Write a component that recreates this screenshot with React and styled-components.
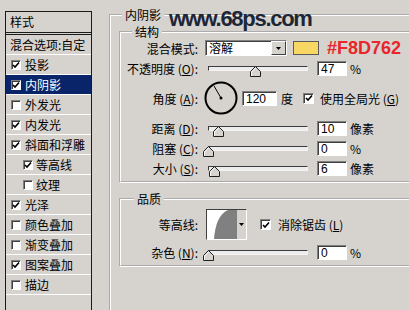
import React from "react";
import styled, { createGlobalStyle } from "styled-components";

const GlobalStyle = createGlobalStyle`
  html, body {
    margin: 0;
    padding: 0;
  }
  body {
    background: #d6d3ce;
    overflow: hidden;
    font-family: "Noto Sans CJK SC", "Noto Sans", sans-serif;
    font-size: 12px;
    color: #000;
  }
`;

const styleItems = [
  { label: "投影", checked: true },
  { label: "内阴影", checked: true, active: true },
  { label: "外发光", checked: false },
  { label: "内发光", checked: true },
  { label: "斜面和浮雕", checked: true },
  { label: "等高线", checked: true, indent: true },
  { label: "纹理", checked: false, indent: true },
  { label: "光泽", checked: true },
  { label: "颜色叠加", checked: false },
  { label: "渐变叠加", checked: false },
  { label: "图案叠加", checked: true },
  { label: "描边", checked: false },
];

const sliderRows = [
  { label: "距离", key: "D", value: 10, unit: "像素" },
  { label: "阻塞", key: "C", value: 0, unit: "%" },
  { label: "大小", key: "S", value: 6, unit: "像素" },
];

const CheckBox = ({ checked, size = 11 }) => (
  <Check $size={size}>
    {checked && (
      <svg width="8" height="8" viewBox="0 0 8 8">
        <polyline points="1,4 3,6 7,1.5" fill="none" stroke="#000" strokeWidth="1.6" />
      </svg>
    )}
  </Check>
);

const Slider = ({ value }) => (
  <SliderWrap>
    <Track />
    <Thumb viewBox="0 0 11 11" style={{ left: `calc(${value}% - 5px)` }}>
      <polygon points="5.5,0.5 10.5,5.5 10.5,10.5 0.5,10.5 0.5,5.5" fill="#d6d3ce" stroke="#202020" />
      <polyline points="1.5,10 1.5,6 5.5,2" fill="none" stroke="#fff" />
    </Thumb>
  </SliderWrap>
);

const Key = ({ k }) => (
  <>
    {" ("}
    <u>{k}</u>
    {"):"}
  </>
);

const App = () => {
  return (
    <Page>
      <GlobalStyle />
      <StylePanel>
        <PanelTitle>样式</PanelTitle>
        <PanelItem $plain>混合选项:自定</PanelItem>
        {styleItems.map((item) => (
          <PanelItem key={item.label} $indent={item.indent} $active={item.active}>
            <CheckBox checked={item.checked} size={10} />
            <ItemLabel $indent={item.indent}>{item.label}</ItemLabel>
          </PanelItem>
        ))}
      </StylePanel>

      <Main>
        <OuterGroup>
          <Legend>内阴影</Legend>
          <Group $top={5} $bottom={3}>
            <Legend>结构</Legend>
            <Row>
              <FieldLabel>混合模式:</FieldLabel>
              <Select>
                <SelectText>溶解</SelectText>
                <DropButton>
                  <svg width="5" height="3" viewBox="0 0 5 3">
                    <polygon points="0,0 5,0 2.5,3" fill="#000" />
                  </svg>
                </DropButton>
              </Select>
              <Swatch />
              <HexText>#F8D762</HexText>
            </Row>
            <Row>
              <FieldLabel>
                不透明度<Key k="O" />
              </FieldLabel>
              <Slider value={47} />
              <ValueBox>47</ValueBox>
              <Unit>%</Unit>
            </Row>
            <Row $h={40}>
              <FieldLabel>
                角度<Key k="A" />
              </FieldLabel>
              <Dial viewBox="0 0 34 34">
                <circle cx="17" cy="17" r="15.5" fill="none" stroke="#000" strokeWidth="2" />
                <line x1="17" y1="17" x2="10" y2="4.9" stroke="#000" strokeWidth="1" />
                <circle cx="17" cy="17" r="1.5" fill="#000" />
              </Dial>
              <ValueBox $gap={4} $w={35}>120</ValueBox>
              <Unit $gap={4}>度</Unit>
              <CheckGap $gap={10}>
                <CheckBox checked />
              </CheckGap>
              <Unit $gap={6}>
                使用全局光 (<u>G</u>)
              </Unit>
            </Row>
            {sliderRows.map((row) => (
              <Row key={row.key}>
                <FieldLabel>
                  {row.label}
                  <Key k={row.key} />
                </FieldLabel>
                <Slider value={row.value} />
                <ValueBox>{row.value}</ValueBox>
                <Unit>{row.unit}</Unit>
              </Row>
            ))}
          </Group>

          <Group $top={10} $bottom={3} $padTop={2}>
            <Legend $offset={13}>品质</Legend>
            <Row $h={35}>
              <FieldLabel>等高线:</FieldLabel>
              <Contour>
                <svg width="29" height="29" viewBox="0 0 29 29">
                  <rect width="29" height="29" fill="#fff" />
                  <path d="M7 29 C 8 15, 12 4, 21 0 L 29 0 L 29 29 Z" fill="#808080" />
                </svg>
                <ContourDrop>
                  <svg width="5" height="3" viewBox="0 0 5 3">
                    <polygon points="0,0 5,0 2.5,3" fill="#000" />
                  </svg>
                </ContourDrop>
              </Contour>
              <CheckGap $gap={13}>
                <CheckBox checked />
              </CheckGap>
              <Unit $gap={7}>
                消除锯齿 (<u>L</u>)
              </Unit>
            </Row>
            <Row>
              <FieldLabel>
                杂色<Key k="N" />
              </FieldLabel>
              <Slider value={0} />
              <ValueBox>0</ValueBox>
              <Unit>%</Unit>
            </Row>
          </Group>
        </OuterGroup>
      </Main>

      <Watermark>www.68ps.com</Watermark>
    </Page>
  );
};

export default App;

const Page = styled.div`
  position: relative;
  display: flex;
  align-items: flex-start;
  width: 409px;
  height: 310px;
  overflow: hidden;
`;

const StylePanel = styled.div`
  margin: 11px 0 0 5px;
  width: 87px;
  height: 310px;
  flex-shrink: 0;
  box-sizing: border-box;
  border: 1px solid #1a1a1a;
  border-bottom: none;
`;

const PanelTitle = styled.div`
  height: 20px;
  line-height: 20px;
  padding-left: 4px;
  border-bottom: 3px double #1a1a1a;
`;

const PanelItem = styled.div`
  display: flex;
  align-items: center;
  height: 19px;
  padding-left: ${(p) => (p.$plain ? 4 : p.$indent ? 17 : 5)}px;
  border-bottom: 1px solid #fff;
  white-space: nowrap;
  background: ${(p) => (p.$active ? "#0a246a" : "transparent")};
  color: ${(p) => (p.$active ? "#fff" : "#000")};
`;

const ItemLabel = styled.span`
  margin-left: ${(p) => (p.$indent ? 3 : 4)}px;
`;

const Check = styled.span`
  display: inline-flex;
  align-items: center;
  justify-content: center;
  flex-shrink: 0;
  width: ${(p) => p.$size}px;
  height: ${(p) => p.$size}px;
  box-sizing: border-box;
  background: #fff;
  border: 1px solid;
  border-color: #808080 #fff #fff #808080;
  box-shadow: inset 1px 1px #404040;
`;

const CheckGap = styled.span`
  display: inline-flex;
  margin-left: ${(p) => p.$gap}px;
`;

const Main = styled.div`
  margin-left: 17px;
  flex-shrink: 0;
`;

const OuterGroup = styled.fieldset`
  margin: 9px 0 0;
  padding: 0;
  min-width: 0;
  width: 330px;
  height: 320px;
  box-sizing: border-box;
  border: 2px groove #fff;
`;

const Group = styled.fieldset`
  margin: ${(p) => p.$top}px 0 0 8px;
  padding: ${(p) => p.$padTop || 0}px 0 ${(p) => p.$bottom}px 0;
  min-width: 0;
  width: 300px;
  box-sizing: border-box;
  border: 2px groove #fff;
`;

const Legend = styled.legend`
  margin-left: ${(p) => p.$offset || 11}px;
  padding: 0 3px;
  height: 12px;
  line-height: 12px;
  font-size: 12px;
`;

const Row = styled.div`
  display: flex;
  align-items: center;
  height: ${(p) => p.$h || 20}px;
  white-space: nowrap;
`;

const FieldLabel = styled.div`
  width: 77px;
  flex-shrink: 0;
  text-align: right;
  u {
    text-decoration-thickness: 1px;
  }
`;

const Select = styled.div`
  display: flex;
  margin-left: 7px;
  width: 82px;
  height: 16px;
  box-sizing: border-box;
  background: #fff;
  border: 1px solid;
  border-color: #808080 #fff #fff #808080;
  box-shadow: inset 1px 1px #404040;
`;

const SelectText = styled.span`
  flex: 1;
  padding-left: 3px;
  line-height: 14px;
`;

const DropButton = styled.span`
  display: flex;
  align-items: center;
  justify-content: center;
  width: 15px;
  box-sizing: border-box;
  background: #d6d3ce;
  border: 1px solid;
  border-color: #fff #404040 #404040 #fff;
`;

const Swatch = styled.div`
  margin-left: 6px;
  width: 26px;
  height: 14px;
  box-sizing: border-box;
  background: #f8d762;
  border: 1px solid #5a5a5a;
`;

const HexText = styled.span`
  margin-left: 8px;
  font-family: "Liberation Sans", Arial, sans-serif;
  font-weight: bold;
  font-size: 18px;
  line-height: 18px;
  color: #e8262b;
`;

const SliderWrap = styled.div`
  position: relative;
  margin-left: 10px;
  width: 100px;
  height: 20px;
  flex-shrink: 0;
`;

const Track = styled.div`
  margin-top: 8px;
  height: 5px;
  box-sizing: border-box;
  background: #ececec;
  border: 1px solid #3c3c3c;
  border-right-color: #f4f4f4;
  border-bottom-color: #f4f4f4;
`;

const Thumb = styled.svg`
  position: absolute;
  top: 8px;
  width: 11px;
  height: 11px;
`;

const ValueBox = styled.div`
  margin-left: ${(p) => p.$gap ?? 9}px;
  width: ${(p) => p.$w || 30}px;
  height: 15px;
  flex-shrink: 0;
  box-sizing: border-box;
  padding-left: 3px;
  background: #fff;
  border: 1px solid;
  border-color: #808080 #fff #fff #808080;
  box-shadow: inset 1px 1px #404040;
  font-family: "Liberation Sans", Arial, sans-serif;
  font-size: 12px;
  line-height: 14px;
`;

const Unit = styled.span`
  margin-left: ${(p) => p.$gap ?? 3}px;
`;

const Dial = styled.svg`
  margin-left: 6px;
  width: 34px;
  height: 34px;
  flex-shrink: 0;
`;

const Contour = styled.div`
  display: flex;
  margin-left: 8px;
  width: 41px;
  height: 31px;
  box-sizing: border-box;
  border: 1px solid;
  border-color: #404040 #fff #fff #404040;
`;

const ContourDrop = styled.span`
  display: flex;
  align-items: center;
  justify-content: center;
  flex: 1;
  background: #d6d3ce;
  border-left: 1px solid #808080;
`;

const Watermark = styled.div`
  position: absolute;
  left: 169px;
  top: 8px;
  font-family: "Liberation Sans", Arial, sans-serif;
  font-weight: bold;
  font-size: 22px;
  line-height: 22px;
  letter-spacing: -1.3px;
  color: #1c2636;
`;
